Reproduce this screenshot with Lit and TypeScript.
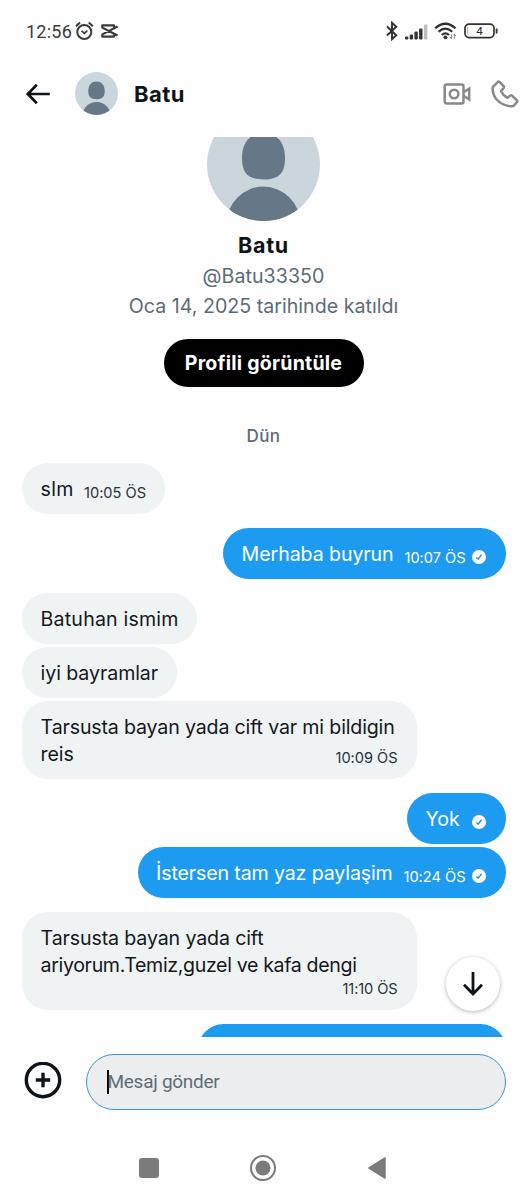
import { LitElement, html, css, svg, nothing } from "lit";
import { customElement, property, query } from "lit/decorators.js";
import { classMap } from "lit/directives/class-map.js";
import { styleMap } from "lit/directives/style-map.js";

/** One line of text, tracked so that it spans the given measure. */
@customElement("tracked-text")
class TrackedText extends LitElement {
  static styles = css`
    :host { display: block; white-space: pre; }
  `;
  @property() text = "";
  @property({ type: Number }) measure = 0;
  @query("span") line!: HTMLSpanElement;

  firstUpdated() {
    if (!this.measure) return;
    const natural = this.line.getBoundingClientRect().width;
    this.line.style.letterSpacing = (this.measure - natural) / this.text.length + "px";
  }
  render() {
    return html`<span>${this.text}</span>`;
  }
}

@customElement("user-avatar")
class UserAvatar extends LitElement {
  static styles = css`
    :host { display: block; }
    svg { display: block; width: 100%; height: 100%; }
  `;
  render() {
    return html`<svg viewBox="0 0 113 113">
      <defs><clipPath id="disc"><circle cx="56.5" cy="56.5" r="56.5" /></clipPath></defs>
      <g clip-path="url(#disc)">
        <rect width="113" height="113" fill="#cbd6dc" />
        <path fill="#667787" d="M56.5 25C69 25 78 33.5 78 50C78 64 73 71.5 56.5 71.5S35 64 35 50C35 33.5 44 25 56.5 25Z" />
        <circle cx="56.5" cy="115.4" r="36.8" fill="#667787" />
      </g>
    </svg>`;
  }
}

interface Message {
  lines: [string, number][];
  width: number;
  mine?: boolean;
  time?: [string, number];
  follow?: boolean;
  timeBelow?: boolean;
}

const messages: Message[] = [
  { lines: [["slm", 33]], width: 143, time: ["10:05 ÖS", 62] },
  { lines: [["Merhaba buyrun", 152]], width: 282.5, mine: true, time: ["10:07 ÖS", 61] },
  { lines: [["Batuhan ismim", 138]], width: 175 },
  { lines: [["iyi bayramlar", 117.5]], width: 154.5, follow: true },
  { lines: [["Tarsusta bayan yada cift var mi bildigin", 354], ["reis", 33]], width: 394.5, follow: true, time: ["10:09 ÖS", 62] },
  { lines: [["Yok", 34]], width: 98.5, mine: true },
  { lines: [["İstersen tam yaz paylaşim", 236.5]], width: 368, mine: true, follow: true, time: ["10:24 ÖS", 62] },
  { lines: [["Tarsusta bayan yada cift", 223], ["ariyorum.Temiz,guzel ve kafa dengi", 316]], width: 394.5, time: ["11:10 ÖS", 55], timeBelow: true },
  { lines: [], width: 307.5, mine: true },
];

@customElement("message-bubble")
class MessageBubble extends LitElement {
  static styles = css`
    :host { display: flex; }
    .bubble {
      display: flex; justify-content: space-between; align-items: flex-end;
      box-sizing: border-box; min-height: 51px; padding: 12.2px 19px 11.8px 18.6px; border-radius: 26px;
      background: #eff3f4; color: #13181c; font-size: 19.6px; line-height: 27px;
    }
    .mine { background: #1d9bf0; color: #fff; margin-left: auto; }
    .below { flex-direction: column; align-items: stretch; }
    .copy { flex: 1 1 0; min-width: 0; }
    .below .copy { flex: none; }
    .meta { display: flex; flex: none; align-items: center; gap: 6px; height: 20px; font-size: 14.6px; line-height: 20px; color: #28323a; }
    .mine .meta { color: #fff; padding-right: 1px; }
    .below .meta { align-self: flex-end; }
    .meta svg { display: block; width: 14px; height: 14px; margin-bottom: 1px; }
  `;
  @property({ attribute: false }) message!: Message;

  render() {
    const m = this.message;
    return html`<div
      class=${classMap({ bubble: true, mine: !!m.mine, below: !!m.timeBelow })}
      style=${styleMap({ width: m.width + "px" })}
    >
      <div class="copy">${m.lines.map(([t, w]) => html`<tracked-text .text=${t} .measure=${w}></tracked-text>`)}</div>
      <div class="meta">
        ${m.time ? html`<tracked-text .text=${m.time[0]} .measure=${m.time[1]}></tracked-text>` : nothing}
        ${m.mine && m.lines.length
          ? html`<svg viewBox="0 0 14 14"><circle cx="7" cy="7" r="7" fill="#fff" /><path d="M4.3 7.4l1.9 1.8 3.4-4.5" fill="none" stroke="#1d8de0" stroke-width="1.3" /></svg>`
          : nothing}
      </div>
    </div>`;
  }
}

const bars = [[0, 12], [4.7, 10], [9.4, 7], [14.1, 4], [19, 0]];

@customElement("app-root")
class AppRoot extends LitElement {
  static styles = css`
    :host {
      display: flex; flex-direction: column; width: 527px; height: 1200px; overflow: hidden;
      position: relative; background: #fefefe; color: #0f1419;
      font-family: Inter, Roboto, "Liberation Sans", sans-serif;
    }
    svg { display: block; flex: none; }
    .status { display: flex; align-items: center; box-sizing: border-box; height: 62px; padding: 0 29px 0 26px; color: #3a3a3a; font-family: Roboto, sans-serif; }
    .clock { font-size: 18px; line-height: 22px; margin-top: 1px; }
    .alarm { margin-left: 3px; }
    .cut { margin-left: 7px; }
    .radios { display: flex; align-items: center; margin-left: auto; }
    .signal { margin-left: 7px; margin-top: 2px; }
    .wifi { margin-left: 6px; }
    .battery { margin-left: 5px; }
    .bar { display: flex; align-items: center; box-sizing: border-box; height: 75px; padding: 0 8px 12px 25px; }
    .small { width: 43px; height: 43px; margin-left: 25px; }
    .title { font-weight: 700; font-size: 22px; line-height: 28px; margin-left: 16px; }
    .call { display: flex; align-items: center; gap: 20px; margin-left: auto; }
    .scroller { height: 900px; flex: none; overflow: hidden; }
    .profile { display: flex; flex-direction: column; align-items: center; }
    .large { width: 113px; height: 113px; margin-top: -29px; }
    .name { font-weight: 700; font-size: 21.5px; line-height: 28px; margin-top: 10px; }
    .sub { font-size: 19.6px; line-height: 30px; color: #5b6b77; }
    .handle { margin-top: 2px; }
    .view { border: 0; border-radius: 24px; background: #000; color: #fff; width: 200px; height: 48px; padding: 0; margin-top: 18px; display: flex; align-items: center; justify-content: center; font: 700 19.6px/28px Inter, Roboto, sans-serif; }
    .day { font-size: 17px; line-height: 24px; font-weight: 500; color: #5b6b77; text-align: center; margin: 36.6px auto 15.8px; width: 34px; }
    .thread { display: flex; flex-direction: column; padding: 0 21.5px 0 22px; }
    .thread message-bubble { margin-bottom: 14px; }
    .thread .joined { margin-bottom: 3px; }
    .down { position: absolute; left: 446px; top: 957px; width: 54px; height: 54px; border-radius: 50%; background: #fff; box-shadow: 0 1px 4px rgba(0, 0, 0, 0.28); display: flex; align-items: center; justify-content: center; }
    .composer { display: flex; align-items: center; box-sizing: border-box; height: 88px; padding: 0 21.5px 0 24px; }
    .field { display: flex; align-items: center; box-sizing: border-box; width: 420px; height: 56px; margin-left: auto; margin-top: 1px; padding-left: 20px; border: 1.5px solid #3a94d8; border-radius: 28px; background: #ebedee; color: #5f6c78; font-family: Roboto, sans-serif; font-size: 19px; line-height: 24px; }
    .caret { width: 2.5px; height: 24px; background: #000; margin-right: -1.5px; }
    .nav { display: flex; align-items: center; box-sizing: border-box; height: 75px; padding: 11px 0 0 139px; }
    .home { margin-left: 90px; }
    .back { margin-left: 91px; }
  `;

  render() {
    return html`
      <div class="status">
        <div class="clock"><tracked-text text="12:56" measure="46"></tracked-text></div>
        <svg class="alarm" width="19" height="20" viewBox="0 0 19 20" fill="none" stroke="#3a3a3a" stroke-width="2">
          <circle cx="9.3" cy="11" r="7" /><path d="M6.5 9.8l2.8 2.5 3-2.7" stroke-width="1.7" /><path d="M1 5.3L5 1.6M17.8 5.3L13.8 1.6" />
        </svg>
        <svg class="cut" width="17" height="14" viewBox="0 0 17 14" fill="none" stroke="#3a3a3a" stroke-width="2.2" stroke-linejoin="round">
          <path d="M16.5 2.4L1.3 10.4V12.6H13V10.8M16.5 11.6L1.3 3.6V1.4H13V3.2" />
        </svg>
        <div class="radios">
          <svg width="12" height="20" viewBox="0 0 12 20" fill="none" stroke="#303030" stroke-width="1.9"><path d="M1 5.5L10.3 14.3L6 18.2V1.8L10.3 5.7L1 14.5" /></svg>
          <svg class="signal" width="23" height="16" viewBox="0 0 23 16">
            ${bars.map(([x, y], i) => svg`<rect x=${x} y=${y + 0.5} width="3.4" height=${15 - y} rx="1.2" fill=${i === 4 ? "#bdbdbd" : "#333"} />`)}
          </svg>
          <svg class="wifi" width="24" height="18" viewBox="0 0 24 18" fill="none" stroke="#303030" stroke-width="2.2">
            <path d="M1.2 6.3Q11.3 -2.8 21.6 6.3M4.6 9.7Q11.3 3.6 18.2 9.7M7.8 13Q11.3 9.8 15 13" />
            <circle cx="11.4" cy="15.3" r="1.9" fill="#303030" stroke="none" />
            <path d="M17.3 12.5v4.2M20.3 12.3v4.2M16 15l1.3 1.7M20.3 12.3l1.5 1.5" stroke="#777" stroke-width="1" />
          </svg>
          <svg class="battery" width="35" height="16" viewBox="0 0 35 16">
            <rect x="2" y="1.2" width="29" height="13.4" rx="4" fill="none" stroke="#333" stroke-width="1.7" />
            <path d="M4.6 4v7.5" stroke="#d5a3a3" stroke-width="1" /><path d="M33.6 5.5v5" stroke="#333" stroke-width="1.8" />
            <text x="16.5" y="12" text-anchor="middle" font-size="11.5" fill="#222">4</text>
          </svg>
        </div>
      </div>

      <div class="bar">
        <svg width="25" height="22" viewBox="0 0 25 22" fill="none" stroke="#0f1419" stroke-width="2.7"><path d="M24.8 11H3M11.8 1.8L2.8 11L11.8 20.2" /></svg>
        <user-avatar class="small"></user-avatar>
        <div class="title"><tracked-text text="Batu" measure="51"></tracked-text></div>
        <div class="call">
          <svg width="28" height="22" viewBox="0 0 28 22" fill="none" stroke="#898989" stroke-width="2.5">
            <rect x="1.7" y="1.5" width="18.8" height="19" rx="2" /><circle cx="11.1" cy="11" r="4.3" /><path d="M20.5 9.3L26.2 5.6V16.4L20.5 12.7" />
          </svg>
          <svg width="28" height="28" viewBox="0 0 28 28" fill="none" stroke="#898989" stroke-width="2.5" stroke-linejoin="round">
            <path d="M8.2 1.7L12.6 6.2Q13.4 7.1 12.5 8.2L10 11.2Q12 15.4 16.4 17.9L19.3 15.5Q20.2 14.8 21.1 15.6L26 20.4Q26.7 21.2 26 22L22.8 25.6Q22.2 26.3 21 26.3Q11.5 26.2 5 18.8Q1.4 13.8 1.6 8.2Q1.6 7 2.4 6.3L6.9 1.8Q7.6 1.2 8.2 1.7Z" />
          </svg>
        </div>
      </div>

      <div class="scroller">
        <div class="profile">
          <user-avatar class="large"></user-avatar>
          <div class="name"><tracked-text text="Batu" measure="51"></tracked-text></div>
          <div class="sub handle"><tracked-text text="@Batu33350" measure="122"></tracked-text></div>
          <div class="sub"><tracked-text text="Oca 14, 2025 tarihinde katıldı" measure="269.5"></tracked-text></div>
          <button class="view"><tracked-text text="Profili görüntüle" measure="157.5"></tracked-text></button>
        </div>
        <div class="day"><tracked-text text="Dün" measure="34"></tracked-text></div>
        <div class="thread">
          ${messages.map((m, i) => html`<message-bubble class=${classMap({ joined: !!messages[i + 1]?.follow })} .message=${m}></message-bubble>`)}
        </div>
      </div>

      <div class="composer">
        <svg width="38" height="38" viewBox="0 0 38 38" fill="none" stroke="#0f1419"><circle cx="19" cy="18" r="16.7" stroke-width="3.4" /><path d="M19 10.8v14.4M11.8 18h14.4" stroke-width="3.4" /></svg>
        <div class="field"><span class="caret"></span><tracked-text text="Mesaj gönder" measure="112"></tracked-text></div>
      </div>

      <div class="nav">
        <svg width="20" height="20" viewBox="0 0 20 20"><rect width="20" height="20" rx="3" fill="#7b7b7b" /></svg>
        <svg class="home" width="28" height="28" viewBox="0 0 28 28"><circle cx="14" cy="14" r="12" fill="none" stroke="#7b7b7b" stroke-width="2" /><circle cx="14" cy="14" r="7.5" fill="#7b7b7b" /></svg>
        <svg class="back" width="18" height="24" viewBox="0 0 18 24"><path d="M17 2V22L1 12Z" fill="#7b7b7b" stroke="#7b7b7b" stroke-linejoin="round" stroke-width="1.5" /></svg>
      </div>

      <div class="down">
        <svg width="20" height="24" viewBox="0 0 20 24" fill="none" stroke="#0f1419" stroke-width="2.8"><path d="M10 0V22M1 12.7L10 22L19 12.7" /></svg>
      </div>
    `;
  }
}
